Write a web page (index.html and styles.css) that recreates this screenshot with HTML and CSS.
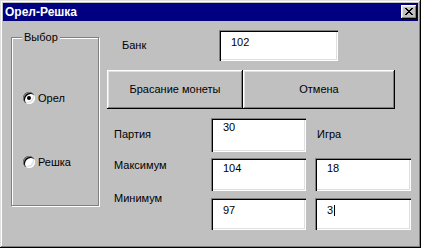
FILE: index.html
```
<!DOCTYPE html>
<html lang="ru">
<head>
  <meta charset="UTF-8">
  <meta name="viewport" content="width=device-width, initial-scale=1">
  <title>Орел-Решка</title>
  <link rel="stylesheet" href="styles.css">
</head>
<body>

  <div class="window">
    <div class="titlebar">
      <span class="title">Орел-Решка</span>
      <button class="close-btn" aria-label="Закрыть">
        <svg width="8" height="7" viewBox="0 0 8 7" shape-rendering="crispEdges">
          <rect x="0" y="0" width="2" height="1"/><rect x="6" y="0" width="2" height="1"/>
          <rect x="1" y="1" width="2" height="1"/><rect x="5" y="1" width="2" height="1"/>
          <rect x="2" y="2" width="4" height="1"/>
          <rect x="3" y="3" width="2" height="1"/>
          <rect x="2" y="4" width="4" height="1"/>
          <rect x="1" y="5" width="2" height="1"/><rect x="5" y="5" width="2" height="1"/>
          <rect x="0" y="6" width="2" height="1"/><rect x="6" y="6" width="2" height="1"/>
        </svg>
      </button>
    </div>

    <div class="client">
      <div class="group">
        <span class="group-label">Выбор</span>
        <label class="radio"><span class="radio-box checked"></span>Орел</label>
        <label class="radio"><span class="radio-box"></span>Решка</label>
      </div>

      <div class="main">
        <div class="bank-row">
          <span class="bank-label">Банк</span>
          <div class="field field-bank">102</div>
        </div>

        <div class="actions">
          <button class="btn btn-toss">Брасание монеты</button>
          <button class="btn btn-cancel">Отмена</button>
        </div>

        <div class="stats">
          <span class="stat-label label-party">Партия</span>
          <div class="field field-party">30</div>
          <span class="game-label">Игра</span>

          <span class="stat-label label-max">Максимум</span>
          <div class="field field-max">104</div>
          <div class="field field-max field-wide">18</div>

          <span class="stat-label label-min">Минимум</span>
          <div class="field field-min">97</div>
          <div class="field field-min field-wide">3<span class="caret"></span></div>
        </div>
      </div>
    </div>
  </div>

</body>
</html>
```

FILE: styles.css
```
* {
  box-sizing: border-box;
}

body {
  margin: 0;
  font-family: 'Liberation Sans', Arial, sans-serif;
  font-size: 11px;
  line-height: 13px;
  color: #000;
  background: #c0c0c0;
}

.window {
  width: 421px;
  height: 248px;
  padding: 3px;
  background: #c0c0c0;
  box-shadow: inset -1px -1px 0 #000, inset 1px 1px 0 #dfdfdf,
              inset -2px -2px 0 #808080, inset 2px 2px 0 #fff;
}

.titlebar {
  height: 18px;
  background: #000080;
  display: flex;
  align-items: center;
  justify-content: space-between;
  padding: 0 1px 0 2px;
}

.title {
  color: #fff;
  font-weight: bold;
  font-size: 12px;
}

.close-btn {
  width: 16px;
  height: 14px;
  padding: 0;
  border: none;
  background: #c0c0c0;
  display: flex;
  align-items: flex-start;
  justify-content: flex-start;
  padding: 3px 0 0 4px;
  box-shadow: inset -1px -1px 0 #000, inset 1px 1px 0 #fff,
              inset -2px -2px 0 #808080, inset 2px 2px 0 #dfdfdf;
}

.client {
  display: flex;
  align-items: flex-start;
}

/* group box */
.group {
  position: relative;
  width: 88px;
  height: 169px;
  margin: 16px 0 0 8px;
  border: 1px solid #808080;
  box-shadow: inset 1px 1px 0 #fff, 1px 1px 0 #fff;
  display: flex;
  flex-direction: column;
  gap: 52px;
  padding: 54px 0 0 11px;
}

.group-label {
  position: absolute;
  top: -7px;
  left: 10px;
  padding: 0 2px;
  background: #c0c0c0;
}

.radio {
  display: flex;
  align-items: center;
  gap: 3px;
  height: 12px;
}

.radio-box {
  width: 12px;
  height: 12px;
  border-radius: 50%;
  background: #fff;
  box-shadow: inset 1px 1px 0 #808080, inset 2px 2px 0 #000,
              inset -1px -1px 0 #fff, inset -2px -2px 0 #dfdfdf;
  display: flex;
  align-items: center;
  justify-content: center;
}

.radio-box.checked::after {
  content: "";
  width: 4px;
  height: 4px;
  border-radius: 50%;
  background: #000;
}

/* right side */
.main {
  margin-left: 8px;
  display: flex;
  flex-direction: column;
}

.field {
  background: #fff;
  padding: 3px 0 0 12px;
  box-shadow: inset 1px 1px 0 #808080, inset 2px 2px 0 #000,
              inset -1px -1px 0 #fff, inset -2px -2px 0 #dfdfdf;
}

.bank-row {
  margin-top: 9px;
  display: flex;
  align-items: center;
}

.bank-label {
  width: 112px;
  padding-left: 15px;
}

.field-bank {
  width: 119px;
  height: 31px;
  padding-top: 6px;
}

.actions {
  margin-top: 9px;
  display: flex;
}

.btn {
  height: 39px;
  border: none;
  padding: 0;
  font: inherit;
  color: #000;
  background: #c0c0c0;
  box-shadow: inset -1px -1px 0 #000, inset 1px 1px 0 #fff,
              inset -2px -2px 0 #808080, inset 2px 2px 0 #dfdfdf;
}

.btn-toss {
  width: 136px;
}

.btn-cancel {
  width: 152px;
}

.stats {
  margin-top: 9px;
  display: grid;
  grid-template-columns: 104px 104px 96px;
  grid-template-rows: 34px 39px 39px;
}

.stat-label {
  align-self: start;
  padding-left: 7px;
}

.label-party { padding-top: 10px; }
.label-max { padding-top: 7px; }
.label-min { padding-top: 1px; }

.game-label {
  align-self: start;
  padding: 10px 0 0 2px;
}

.field-party {
  width: 95px;
  height: 34px;
  padding-top: 3px;
}

.field-max {
  align-self: end;
  width: 95px;
  height: 33px;
  padding-top: 4px;
}

.field-min {
  align-self: end;
  width: 95px;
  height: 32px;
  padding-top: 6px;
}

.field-wide {
  width: 96px;
}

.caret {
  display: inline-block;
  width: 1px;
  height: 11px;
  margin-left: 1px;
  background: #000;
  vertical-align: -2px;
}
```
